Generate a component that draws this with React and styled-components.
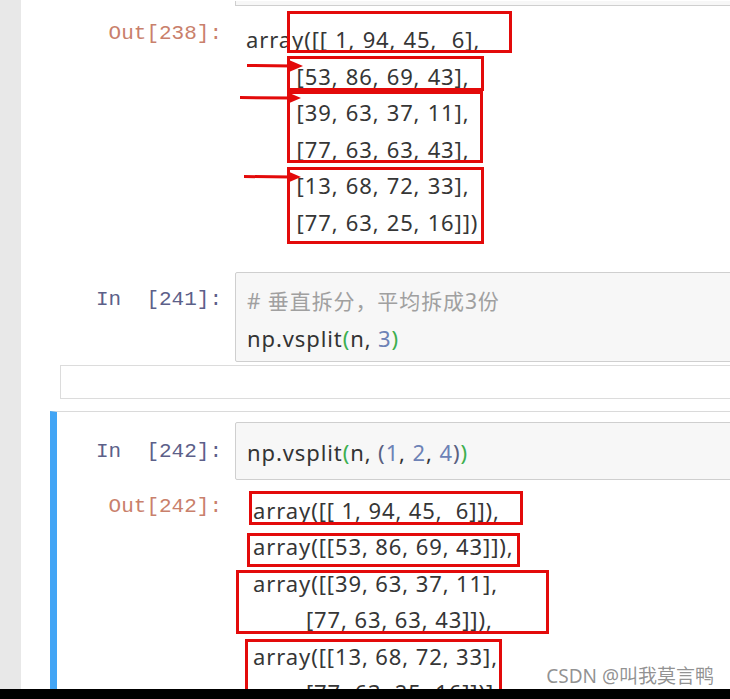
import React from 'react';
import styled, { createGlobalStyle } from 'styled-components';

const GlobalStyle = createGlobalStyle`
  html, body {
    margin: 0;
    padding: 0;
    background: #fff;
    overflow: hidden;
  }
  body {
    font-family: "Noto Sans", "Noto Sans CJK SC", sans-serif;
  }
`;

const red = '#e30a0a';

const Screen = styled.div`
  width: 730px;
  height: 699px;
  display: flex;
  flex-direction: column;
  overflow: hidden;
`;

const Frame = styled.div`
  position: relative;
  flex: 1;
  min-height: 0;
  display: flex;
  overflow: hidden;
`;

const Gutter = styled.div`
  width: 21px;
  flex-shrink: 0;
  background: #e8e8e8;
`;

const Notebook = styled.div`
  flex: 1;
  min-width: 0;
  padding-left: 29px;
  margin-right: -6px;
`;

const Cell = styled.div`
  border-left: 7px solid ${(p) => (p.$selected ? '#42a5f5' : 'transparent')};
  border-top: 1px solid ${(p) => (p.$selected ? '#dadada' : 'transparent')};
  margin-top: ${(p) => p.$mt || 0}px;
  padding-top: ${(p) => p.$pt || 0}px;
`;

const Row = styled.div`
  display: grid;
  grid-template-columns: 178px 1fr;
`;

const Prompt = styled.div`
  font-family: "Liberation Mono", monospace;
  font-size: 21px;
  line-height: 26px;
  text-align: right;
  padding-right: 13px;
  padding-top: ${(p) => p.$pt || 0}px;
  color: ${(p) => (p.$out ? '#c9806b' : '#5c6089')};
  white-space: pre;
`;

const InputStub = styled.div`
  height: 4px;
  background: #f7f7f7;
  border: 1px solid #cfcfcf;
  border-top: none;
`;

const InputBox = styled.div`
  background: #f7f7f7;
  border: 1px solid #cfcfcf;
  border-radius: 2px;
  padding: ${(p) => p.$pad};
  font-size: 22px;
  line-height: 36.5px;
  letter-spacing: 0.9px;
  color: #333;
  white-space: pre;
`;

const Comment = styled.div`
  font-family: "Noto Sans", "Noto Sans CJK SC", sans-serif;
  font-size: 21px;
  color: #a0a0a0;
`;

const Paren = styled.span`
  color: ${(p) => (p.$match ? '#3daf4f' : '#5a6080')};
`;

const Num = styled.span`
  color: #6d82b6;
`;

const Output = styled.div`
  position: relative;
  padding: ${(p) => p.$pad};
  font-size: 22px;
  line-height: 36.5px;
  letter-spacing: 0.9px;
  word-spacing: ${(p) => p.$ws || 0}px;
  color: #363636;
  white-space: pre;
`;

const Mark = styled.div`
  position: absolute;
  left: ${(p) => p.$x}px;
  top: ${(p) => p.$y}px;
  width: ${(p) => p.$w}px;
  height: ${(p) => p.$h}px;
  border: 3px solid ${red};
  box-sizing: border-box;
  pointer-events: none;
`;

const ArrowWrap = styled.svg`
  position: absolute;
  left: ${(p) => p.$x}px;
  top: ${(p) => p.$y - 7}px;
  overflow: visible;
`;

const EmptyBar = styled.div`
  margin: 3px 0 0 10px;
  height: 32px;
  border: 1px solid #dcdcdc;
  background: #fff;
`;

const Watermark = styled.div`
  position: absolute;
  right: 16px;
  bottom: 3px;
  font-family: "Noto Sans", "Noto Sans CJK SC", sans-serif;
  font-size: 19px;
  line-height: 20px;
  color: rgba(110, 110, 110, 0.75);
  text-shadow: 0 0 2px #fff;
`;

const BlackBar = styled.div`
  height: 10px;
  flex-shrink: 0;
  background: #000;
`;

const Arrow = ({ x, y, w }) => (
  <ArrowWrap $x={x} $y={y} width={w} height={14} viewBox={`0 0 ${w} 14`}>
    <line x1="0" y1="6.5" x2={w - 10} y2="7" stroke={red} strokeWidth="3" />
    <polygon points={`${w - 14},1 ${w},7 ${w - 14},13`} fill={red} />
  </ArrowWrap>
);

const out238 = `array([[ 1, 94, 45,  6],
       [53, 86, 69, 43],
       [39, 63, 37, 11],
       [77, 63, 63, 43],
       [13, 68, 72, 33],
       [77, 63, 25, 16]])`;

const out242 = `array([[ 1, 94, 45,  6]]),
array([[53, 86, 69, 43]]),
array([[39, 63, 37, 11],
        [77, 63, 63, 43]]),
array([[13, 68, 72, 33],
        [77, 63, 25, 16]])]`;

export default function App() {
  return (
    <>
      <GlobalStyle />
      <Screen>
        <Frame>
          <Gutter />
          <Notebook>
            <Cell>
              <Row>
                <Prompt />
                <InputStub />
              </Row>
              <Row>
                <Prompt $out $pt={15}>Out[238]:</Prompt>
                <Output $pad="15px 0 0 11px" $ws={0.6}>
                  {out238}
                  <Mark $x={52} $y={5} $w={225} $h={42} />
                  <Mark $x={52} $y={50} $w={197} $h={35} />
                  <Mark $x={52} $y={85} $w={196} $h={72} />
                  <Mark $x={52} $y={161} $w={197} $h={77} />
                  <Arrow x={12} y={60} w={56} />
                  <Arrow x={5} y={92} w={61} />
                  <Arrow x={9} y={171} w={57} />
                </Output>
              </Row>
            </Cell>

            <Cell $mt={21} $pt={10}>
              <Row>
                <Prompt $pt={15}>In  [241]:</Prompt>
                <InputBox $pad="10px 11px 5px">
                  <Comment># 垂直拆分，平均拆成3份</Comment>
                  np.vsplit<Paren $match>(</Paren>n, <Num>3</Num>
                  <Paren $match>)</Paren>
                </InputBox>
              </Row>
            </Cell>

            <EmptyBar />

            <Cell $selected $mt={12} $pt={10}>
              <Row>
                <Prompt $pt={17}>In  [242]:</Prompt>
                <InputBox $pad="11px 11px 8px">
                  np.vsplit<Paren $match>(</Paren>n, <Paren>(</Paren>
                  <Num>1</Num>, <Num>2</Num>, <Num>4</Num>
                  <Paren>)</Paren>
                  <Paren $match>)</Paren>
                </InputBox>
              </Row>
              <Row>
                <Prompt $out $pt={14}>Out[242]:</Prompt>
                <Output $pad="12px 0 0 18px">
                  {out242}
                  <Mark $x={14} $y={11} $w={274} $h={34} />
                  <Mark $x={12} $y={53} $w={273} $h={34} />
                  <Mark $x={1} $y={90} $w={313} $h={64} />
                  <Mark $x={10} $y={159} $w={257} $h={60} />
                </Output>
              </Row>
            </Cell>
          </Notebook>
          <Watermark>CSDN @叫我莫言鸭</Watermark>
        </Frame>
        <BlackBar />
      </Screen>
    </>
  );
}
